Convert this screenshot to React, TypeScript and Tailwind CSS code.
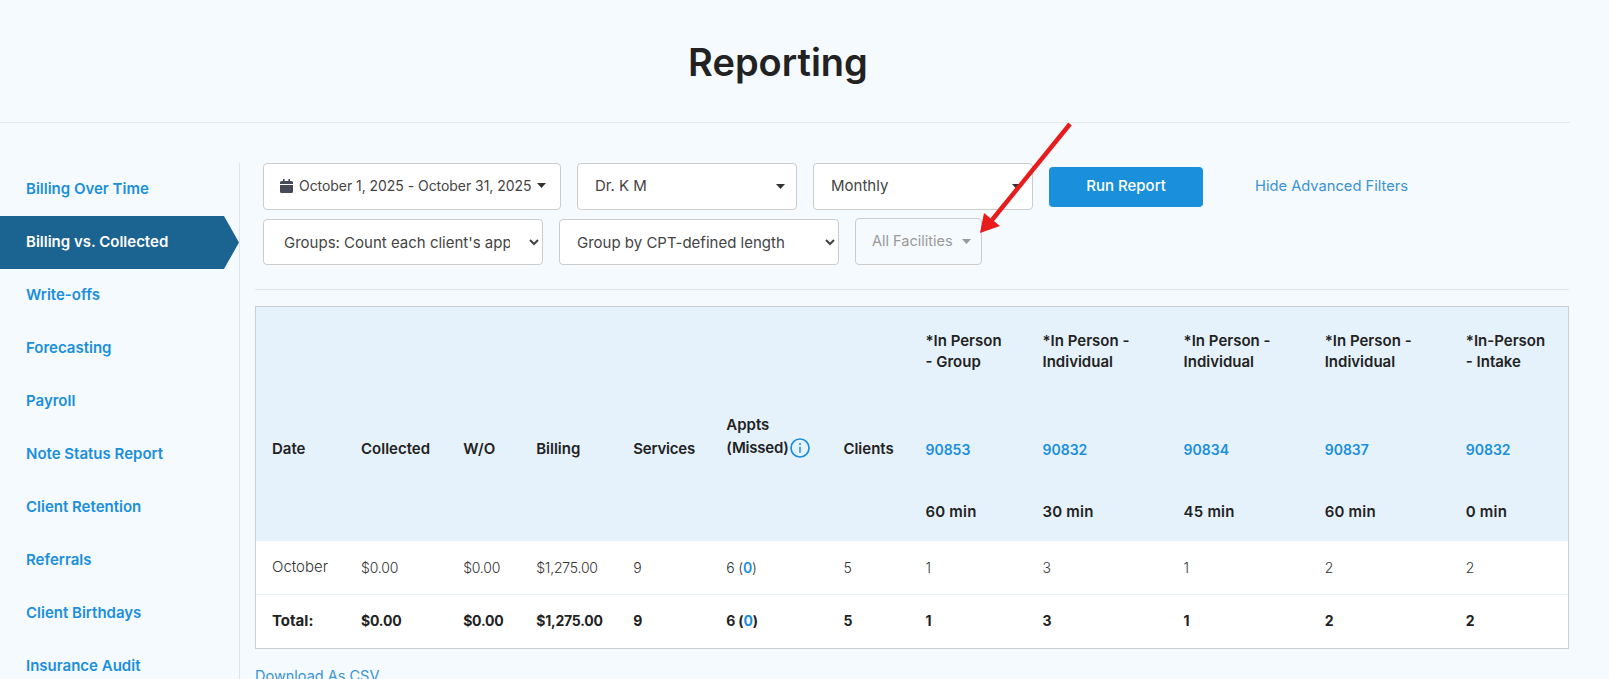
import React from "react";

const links = ["Billing Over Time","Billing vs. Collected","Write-offs","Forecasting","Payroll","Note Status Report","Client Retention","Referrals","Client Birthdays","Insurance Audit"];
const widths = [89,102,73,97,93,117,82,117,141,141,141,118];
const box = "h-full rounded-[4px] border border-[#cccccc] bg-white text-[15px] text-[#444444]";
const Caret = ({ c = "#333333" }: { c?: string }) => (
  <svg width="9" height="5" viewBox="0 0 9 5" className="shrink-0"><path d="M0 0h9L4.5 5z" fill={c} /></svg>
);
const rowA = ["October","$0.00","$0.00","$1,275.00","9","","5","1","3","1","2","2"];
const rowB = ["Total:","$0.00","$0.00","$1,275.00","9","","5","1","3","1","2","2"];
const groups: [string, string][] = [["*In Person","- Group"],["*In Person -","Individual"],["*In Person -","Individual"],["*In Person -","Individual"],["*In-Person","- Intake"]];

export default function App() {
  return (
    <div className="relative h-[679px] overflow-hidden bg-[#f5faff] font-['Inter',sans-serif] text-[#222222]">
      <header className="mr-[39px] flex h-[123px] items-center justify-center border-b border-[#e2e8ec] pr-[14px] pt-[2px]">
        <h1 className="text-[38px] font-semibold leading-none text-[#222222]">Reporting</h1>
      </header>
      <div className="flex pt-[40px]">
        <nav className="w-[240px] shrink-0 border-r border-[#dfe5ea]">
          {links.map((l, i) => (
            <div key={l} className={i === 1
              ? "flex h-[53px] items-center bg-[#1b6491] pl-[26px] text-[15px] font-semibold text-white [clip-path:polygon(0_0,224px_0,100%_50%,224px_100%,0_100%)]"
              : "flex h-[53px] items-center pl-[26px] text-[15px] font-semibold text-[#1a8fdb]"}>{l}</div>
          ))}
        </nav>
        <main className="min-w-0 flex-1 pl-[15px] pr-[40px]">
          <div className="pl-[8px]">
            <div className="flex h-[47px] items-center gap-[16px]">
              <div className={`${box} flex w-[298px] shrink-0 items-center gap-[6px] pb-[2px] pl-[16px] !text-[14px]`}>
                <svg width="13" height="14" viewBox="0 0 13 14"><path d="M3 0h1.6v2h3.8V0H10v2h1.5A1.5 1.5 0 0 1 13 3.5V5H0V3.500A1.500 1.500 0 0 1 1.500 2H3zM0 6h13v6.500a1.500 1.500 0 0 1-1.500 1.500h-10A1.500 1.500 0 0 1 0 12.500z" fill="#444b57" /></svg>
                <span className="whitespace-nowrap tracking-[-0.05px]">October 1, 2025 - October 31, 2025</span>
                <Caret />
              </div>
              <div className={`${box} flex w-[220px] shrink-0 items-center justify-between pl-[17px] pr-[11px]`}>
                <span>Dr. K M</span><Caret />
              </div>
              <div className={`${box} flex w-[220px] shrink-0 items-center justify-between pl-[17px] pr-[11px]`}>
                <span>Monthly</span><Caret />
              </div>
              <button className="h-[40px] w-[154px] shrink-0 rounded-[4px] bg-[#1a8fdb] pb-[1px] text-[15px] font-medium text-white">Run Report</button>
              <a className="ml-[36px] whitespace-nowrap pb-[1px] text-[14.7px] text-[#3a93d3]">Hide Advanced Filters</a>
            </div>
            <div className="mt-[9px] flex h-[46px] items-stretch gap-[16px]">
              <select className={`${box} w-[280px] pl-[16px] pr-[16px]`} defaultValue="a">
                <option value="a">Groups: Count each client's appointment</option>
              </select>
              <select className={`${box} w-[280px] pl-[13px] pr-[8px]`} defaultValue="a">
                <option value="a">Group by CPT-defined length</option>
              </select>
              <div className="-mt-[1px] flex w-[127px] items-center justify-between rounded-[4px] border border-[#cccccc] pb-[1px] pl-[16px] pr-[10px] text-[14.5px] text-[#999999]">
                <span>All Facilities</span><Caret c="#999999" />
              </div>
            </div>
          </div>
          <div className="mt-[24px] border-t border-[#dfe5ea]" />
          <div className="mt-[16px] border border-[#c9ced2] bg-white">
            <table className="w-full table-fixed border-collapse text-[14px]">
              <colgroup>{widths.map((w, i) => <col key={i} style={{ width: w }} />)}</colgroup>
              <thead className="bg-[#e5f2fb] text-[15px] font-semibold text-[#222222]">
                <tr className="h-[83px]">
                  <th colSpan={7} />
                  {groups.map((t, i) => (
                    <th key={i} className="pl-[16px] pr-[4px] pt-[4px] text-left font-semibold leading-[21px]">{t[0]}<br />{t[1]}</th>
                  ))}
                </tr>
                <tr className="h-[87px]">
                  {["Date","Collected","W/O","Billing"].map(t => <th key={t} className="pl-[16px] pt-[31px] text-left font-semibold">{t}</th>)}
                  <th className="pl-[16px] pt-[31px] text-left font-semibold tracking-[-0.2px]">Services</th>
                  <th className="pl-[16px] pt-[5px] text-left font-semibold leading-[23px]">
                    Appts<br />
                    <span className="inline-flex items-center gap-[1px] tracking-[-0.2px]">(Missed)
                      <svg width="20" height="20" viewBox="0 0 20 20" className="shrink-0"><circle cx="10" cy="10" r="9" fill="none" stroke="#1a8fdb" strokeWidth="1.700" /><circle cx="10" cy="6" r="1" fill="#1a8fdb" /><path d="M10 8.800v6" stroke="#1a8fdb" strokeWidth="1.500" /></svg>
                    </span>
                  </th>
                  <th className="pl-[16px] pt-[31px] text-left font-semibold">Clients</th>
                  {["90853","90832","90834","90837","90832"].map((t, i) => <th key={i} className="pl-[16px] pt-[31px] text-left text-[14px] font-semibold text-[#1a8fdb]">{t}</th>)}
                </tr>
                <tr className="h-[64px]">
                  <th colSpan={7} />
                  {["60 min","30 min","45 min","60 min","0 min"].map((t, i) => <th key={i} className="pl-[16px] pt-[6px] text-left font-semibold tracking-[0.2px]">{t}</th>)}
                </tr>
              </thead>
              <tbody>
                <tr className="h-[53px] border-b border-[#e5f2fb] font-light text-[#333333]">
                  {rowA.map((t, i) => (
                    <td key={i} className={i === 0 ? "pl-[16px] text-[15px]" : "pl-[16px] tracking-[-0.2px]"}>{i === 5 ? <>6 (<b className="font-semibold text-[#1a8fdb]">0</b>)</> : t}</td>
                  ))}
                </tr>
                <tr className="h-[54px] font-bold text-[#222222]">
                  {rowB.map((t, i) => (
                    <td key={i} className={i === 0 ? "pb-[1px] pl-[16px] text-[15px]" : "pb-[1px] pl-[16px] tracking-[-0.2px]"}>{i === 5 ? <>6 (<span className="text-[#1a8fdb]">0</span>)</> : t}</td>
                  ))}
                </tr>
              </tbody>
            </table>
          </div>
          <a className="mt-[16px] block text-[14.500px] text-[#3a93d3]">Download As CSV</a>
        </main>
      </div>
      <svg className="pointer-events-none absolute left-0 top-0" width="1609" height="679">
        <path d="M1070 124L992 220" stroke="#e71d1d" strokeWidth="4.500" />
        <path d="M980 233L984 213L1000 226z" fill="#e71d1d" />
      </svg>
    </div>
  );
}
